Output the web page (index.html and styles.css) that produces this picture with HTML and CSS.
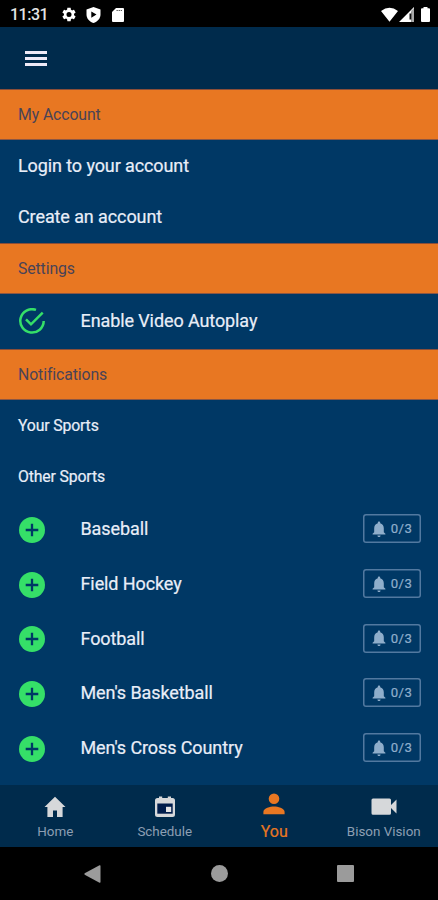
FILE: index.html
```html
<!DOCTYPE html>
<html lang="en">
<head>
<meta charset="utf-8">
<title>Account</title>
<link rel="stylesheet" href="styles.css">
</head>
<body>
<svg width="0" height="0" class="defs">
  <symbol id="plus" viewBox="0 0 26 26"><circle cx="13" cy="13" r="13" fill="#35df68"/><path d="M13 6.700v12.600M6.700 13h12.600" stroke="#003865" stroke-width="2.300"/></symbol>
  <symbol id="bell" viewBox="4 2 16 20"><path fill="currentColor" d="M12 22c1.100 0 2-.9 2-2h-4c0 1.100.89 2 2 2zm6-6v-5c0-3.070-1.640-5.640-4.500-6.320V4c0-.83-.67-1.500-1.500-1.500s-1.500.67-1.500 1.500v.68C7.630 5.360 6 7.920 6 11v5l-2 2v1h16v-1l-2-2z"/></symbol>
</svg>
<div class="status">
  <span class="time">11:31</span>
  <svg class="gear" viewBox="2 2 20 20"><path fill="#fff" d="M19.14 12.94c.04-.3.06-.61.06-.94 0-.32-.02-.64-.07-.94l2.030-1.580c.18-.14.23-.41.12-.61l-1.920-3.320c-.12-.22-.37-.29-.59-.22l-2.390.96c-.5-.38-1.030-.7-1.620-.94l-.36-2.540c-.04-.24-.24-.41-.48-.41h-3.840c-.24 0-.43.17-.47.41l-.36 2.540c-.59.24-1.130.57-1.620.94l-2.390-.96c-.22-.08-.47 0-.59.22L2.740 8.870c-.12.21-.08.47.12.61l2.030 1.580c-.05.3-.09.63-.09.94s.02.64.07.94l-2.030 1.580c-.18.14-.23.41-.12.61l1.920 3.320c.12.22.37.29.59.22l2.390-.96c.5.38 1.030.7 1.620.94l.36 2.540c.05.24.24.41.48.41h3.840c.24 0 .44-.17.47-.41l.36-2.540c.59-.24 1.130-.56 1.620-.94l2.390.96c.22.08.47 0 .59-.22l1.920-3.320c.12-.22.07-.47-.12-.61l-2.010-1.580zM12 15.600a3.600 3.600 0 1 1 0-7.200 3.600 3.600 0 0 1 0 7.200z"/></svg>
  <svg class="shield" viewBox="0 0 15 16"><path fill="#fff" fill-rule="evenodd" d="M7.500 0 14.500 2.600V7.500C14.500 11.500 11.500 14.800 7.500 16 3.500 14.800.5 11.500.5 7.500V2.600zM5.300 4.500v6.200L10.500 7.600z"/></svg>
  <svg class="sd" viewBox="0 0 12 14"><path fill="#fff" d="M4 0h7a1 1 0 0 1 1 1v12a1 1 0 0 1-1 1H1a1 1 0 0 1-1-1V4z"/><path stroke="#555" stroke-width="1.200" stroke-dasharray="1.300 .8" d="M4.500 2.500h5.500"/></svg>
  <svg class="signals" viewBox="0 0 50 16"><path fill="#fff" d="M0 4Q8.500-2.500 17 4L8.500 14.700zM18 15 33 0V4.500H30.500V15z"/><path fill="#aaa" d="M30.500 3.500 33 1v14h-2.500z"/><path fill="#111" d="M28.500 6.500h1.800v6h-1.800z"/><path fill="#fff" d="M42.500 1.300V0h4v1.300H48a1 1 0 0 1 1 1V14a1 1 0 0 1-1 1h-7a1 1 0 0 1-1-1V2.300a1 1 0 0 1 1-1z"/></svg>
</div>
<header class="appbar"><span class="menu"><i></i><i></i><i></i></span></header>
<main>
  <h2 class="section">My Account</h2>
  <div class="row link">Login to your account</div>
  <div class="row link">Create an account</div>
  <h2 class="section">Settings</h2>
  <div class="row option">
    <svg class="check" viewBox="0 0 26 26" fill="none" stroke="#35df68" stroke-width="2.500"><path d="M17 1.900A11.700 11.700 0 1 0 24.700 13"/><path d="M7 11.300 12 16.300 23.700 4.600"/></svg>
    <span>Enable Video Autoplay</span>
  </div>
  <h2 class="section">Notifications</h2>
  <div class="row sub">Your Sports</div>
  <div class="row sub">Other Sports</div>
  <div class="sports">
    <div class="sport"><svg class="plus"><use href="#plus"/></svg><span class="name">Baseball</span><span class="count"><svg><use href="#bell"/></svg>0/3</span></div>
    <div class="sport"><svg class="plus"><use href="#plus"/></svg><span class="name">Field Hockey</span><span class="count"><svg><use href="#bell"/></svg>0/3</span></div>
    <div class="sport"><svg class="plus"><use href="#plus"/></svg><span class="name">Football</span><span class="count"><svg><use href="#bell"/></svg>0/3</span></div>
    <div class="sport"><svg class="plus"><use href="#plus"/></svg><span class="name">Men's Basketball</span><span class="count"><svg><use href="#bell"/></svg>0/3</span></div>
    <div class="sport"><svg class="plus"><use href="#plus"/></svg><span class="name">Men's Cross Country</span><span class="count"><svg><use href="#bell"/></svg>0/3</span></div>
  </div>
</main>
<nav class="tabs">
  <div class="tab"><svg width="22" height="22" viewBox="0 0 22 22"><path fill="#d6d8da" d="M11 .8 21.500 11H18.600v10H13v-6.500H9V21H3.400V11H.5z"/></svg><span>Home</span></div>
  <div class="tab"><svg width="22" height="22" viewBox="0 0 22 22"><path fill="#d6d8da" d="M5 .5h3.200v1.500h5.600V.5H17V2h1.500A2.500 2.500 0 0 1 21 4.500v14a2.500 2.500 0 0 1-2.500 2.500h-15A2.500 2.500 0 0 1 1 18.500v-14A2.500 2.500 0 0 1 3.500 2H5z"/><path fill="#001d4c" d="M3.300 7.500h15.400v10.200H3.300z"/><path fill="#e3e4e6" d="M12 10.800h5.200V16H12z"/></svg><span>Schedule</span></div>
  <div class="tab active"><svg width="22" height="22" viewBox="0 0 22 22"><path fill="#e87722" d="M11 11a5.300 5.300 0 1 0 0-10.600A5.300 5.300 0 0 0 11 11zM.4 21.200v-2.500c0-3.500 7-5.300 10.600-5.300s10.600 1.800 10.600 5.300v2.500z"/></svg><span>You</span></div>
  <div class="tab"><svg width="26" height="22" viewBox="0 0 26 22"><path fill="#d6d8da" d="M2 2.500h16.500A1.500 1.500 0 0 1 20 4v5l5.500-5.500v14L20 12v5.300a1.500 1.500 0 0 1-1.500 1.500H2A1.500 1.500 0 0 1 .5 17.300V4A1.500 1.500 0 0 1 2 2.500z"/></svg><span>Bison Vision</span></div>
</nav>
<footer class="system">
  <svg width="17" height="18" viewBox="0 0 17 18"><path fill="#9b9b9b" d="M.7 8.200 15.500.3Q16.500 0 16.500 1v16q0 1-1 .7L.7 9.800Q0 9 .7 8.200z"/></svg>
  <i class="circle"></i>
  <i class="square"></i>
</footer>
</body>
</html>
```

FILE: styles.css
```css
* { box-sizing: border-box; }
body { margin: 0; width: 438px; height: 900px; overflow: hidden; display: flex; flex-direction: column; background: #003865; color: #e9eef8; font-family: Roboto, "Liberation Sans", sans-serif; }
svg { display: block; flex: none; }
.defs { display: none; }
.status { height: 27px; flex: none; background: #000; display: flex; align-items: center; padding: 2px 8px 0 10px; }
.time { color: #e4e4e4; font-size: 16px; font-weight: 500; letter-spacing: -.5px; width: 52px; }
.gear { width: 14px; height: 15px; }
.shield { width: 15px; height: 16px; margin-left: 10px; }
.sd { width: 12px; height: 14px; margin-left: 11px; }
.signals { width: 50px; height: 16px; margin-left: auto; margin-right: -.5px; }
.appbar { height: 62px; flex: none; background: #002b4c; display: flex; align-items: center; padding: 1px 25px 0; }
.menu { width: 22px; display: grid; gap: 3px; }
.menu i { height: 3px; background: #eeeaf7; }
main { height: 696px; flex: none; }
.section { margin: 0; height: 51px; padding: 0 18px; background: #e87722; color: #484357; font-size: 15.8px; letter-spacing: -.1px; font-weight: 400; border-top: 1px solid #8b4e38; border-bottom: 1px solid #8b5643; line-height: 49px; }
.row { display: flex; align-items: center; padding: 0 18px; -webkit-text-stroke: .2px; }
.link { height: 51.5px; padding-bottom: 1px; font-size: 18px; letter-spacing: -.1px; }
.option { height: 55px; padding-bottom: 2px; font-size: 18px; letter-spacing: -.1px; }
.check { width: 26px; height: 26px; margin: 0 36px 0 .5px; }
.sub { height: 51px; font-size: 15.8px; letter-spacing: -.15px; }
.sport { height: 54.7px; display: flex; align-items: center; padding: 0 17px 1px 18.5px; font-size: 18px; letter-spacing: -.1px; }
.plus { width: 26px; height: 26px; margin-top: 2px; }
.name { margin-left: 36px; flex: 1; -webkit-text-stroke: .2px; }
.count { width: 58px; height: 29px; box-shadow: inset 0 0 0 1.5px #5279a0; border-radius: 3px; display: flex; align-items: center; justify-content: center; gap: 5px; color: #8faecb; font-size: 13.2px; letter-spacing: .4px; -webkit-text-stroke: .2px; }
.count svg { width: 14px; height: 16px; }
.tabs { height: 62px; flex: none; background: #002b4c; display: grid; grid-template-columns: repeat(4, 1fr); }
.tab { display: flex; flex-direction: column; align-items: center; padding: 11px 0 0 1px; color: #8d9fb3; font-size: 13.4px; line-height: 16px; gap: 6px; white-space: nowrap; }
.active { color: #e87722; font-size: 16px; padding-top: 8px; gap: 9px; -webkit-text-stroke: .2px; }
.system { height: 53px; flex: none; background: #000; display: flex; align-items: center; justify-content: space-between; padding: 0 84px; }
.circle { width: 17px; height: 17px; border-radius: 50%; background: #9b9b9b; }
.square { width: 17px; height: 17px; border-radius: 1px; background: #9b9b9b; }
```
